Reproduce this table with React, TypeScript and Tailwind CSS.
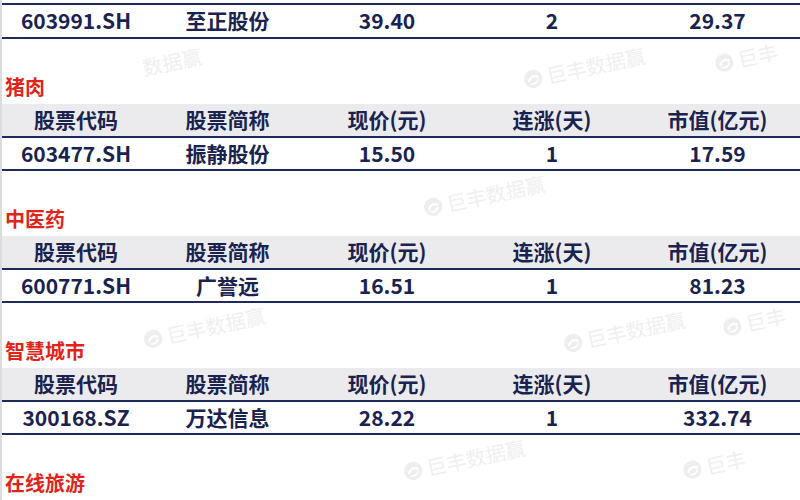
import React from 'react';

const cols = ['w-[148px]', 'w-[155px]', 'w-[164px]', 'w-[166px]', 'flex-1'];
const headers = ['股票代码', '股票简称', '现价(元)', '连涨(天)', '市值(亿元)'];

const sections = [
  { title: '猪肉', row: ['603477.SH', '振静股份', '15.50', '1', '17.59'] },
  { title: '中医药', row: ['600771.SH', '广誉远', '16.51', '1', '81.23'] },
  { title: '智慧城市', row: ['300168.SZ', '万达信息', '28.22', '1', '332.74'] },
];

// faint watermarks, kept in the blank bands between tables
const marks = [
  { x: 140, y: 52, text: '数据赢', logo: false },
  { x: 520, y: 58, text: '巨丰数据赢', logo: true },
  { x: 712, y: 48, text: '巨丰', logo: true },
  { x: 420, y: 186, text: '巨丰数据赢', logo: true },
  { x: 140, y: 318, text: '巨丰数据赢', logo: true },
  { x: 560, y: 322, text: '巨丰数据赢', logo: true },
  { x: 720, y: 312, text: '巨丰', logo: true },
  { x: 400, y: 450, text: '巨丰数据赢', logo: true },
  { x: 680, y: 455, text: '巨丰', logo: true },
];

function Cell({ i, children }: { i: number; children: React.ReactNode }) {
  return <div className={`${cols[i]} flex items-center justify-center`}>{children}</div>;
}

function Row({ cells, h }: { cells: string[]; h: string }) {
  return (
    <div className={`flex ${h} text-[21px] font-bold text-[#1a2350]`}>
      {cells.map((v, i) => (
        <Cell key={i} i={i}>{v}</Cell>
      ))}
    </div>
  );
}

function Logo() {
  return (
    <svg width="20" height="20" viewBox="0 0 22 22">
      <circle cx="11" cy="11" r="10" fill="#eeeeee" />
      <path d="M6 13c2-5 7-6 10-3" stroke="#fff" strokeWidth="2.4" fill="none" strokeLinecap="round" />
      <path d="M8 16c3 1 6 0 8-3" stroke="#fff" strokeWidth="2" fill="none" strokeLinecap="round" />
    </svg>
  );
}

export default function App() {
  return (
    <div
      className="relative w-[800px] h-[500px] overflow-hidden bg-white border-l-2 border-[#dcdcdc]"
      style={{ fontFamily: '"Noto Sans CJK SC", "Noto Sans", sans-serif' }}
    >
      {marks.map((m, i) => (
        <div
          key={i}
          className="absolute flex items-center gap-1 -rotate-12 text-[20px] leading-none text-[#efefef] pointer-events-none select-none"
          style={{ left: m.x, top: m.y }}
        >
          {m.logo && <Logo />}
          <span>{m.text}</span>
        </div>
      ))}

      <div className="relative flex flex-col pt-[3px]">
        <div className="h-[2px] bg-[#1f2a5c]" />
        <Row cells={['603991.SH', '至正股份', '39.40', '2', '29.37']} h="h-[32px]" />
        <div className="h-[2px] bg-[#1f2a5c]" />

        {sections.map((s) => (
          <div key={s.title} className="flex flex-col mt-[31px]">
            <div className="h-[34px] flex items-center pl-[3px] text-[20px] font-bold text-[#e2231a]">{s.title}</div>
            <div className="bg-[#ebebee]">
              <Row cells={headers} h="h-[32px]" />
            </div>
            <div className="h-[2px] bg-[#1f2a5c]" />
            <Row cells={s.row} h="h-[31px]" />
            <div className="h-[2px] bg-[#1f2a5c]" />
          </div>
        ))}

        <div className="flex flex-col mt-[31px]">
          <div className="h-[34px] flex items-center pl-[3px] text-[20px] font-bold text-[#e2231a]">在线旅游</div>
          <div className="h-[32px] bg-[#ebebee]" />
        </div>
      </div>
    </div>
  );
}
